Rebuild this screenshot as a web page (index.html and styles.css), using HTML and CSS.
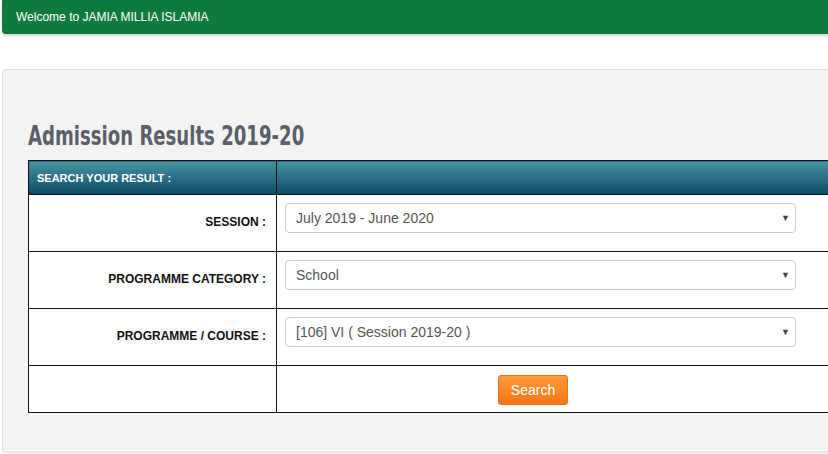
FILE: index.html
```html
<!DOCTYPE html>
<html lang="en">
<head>
    <meta charset="UTF-8">
    <title>Admission Results 2019-20</title>
    <link rel="stylesheet" href="styles.css">
</head>
<body>
    <div class="topbar">Welcome to JAMIA MILLIA ISLAMIA</div>
    <div class="panel">
        <h2><span>Admission Results 2019-20</span></h2>
        <table class="result">
            <tr class="head">
                <th>SEARCH YOUR RESULT :</th>
                <th></th>
            </tr>
            <tr>
                <td class="label">SESSION :</td>
                <td class="field">
                    <div class="select">July 2019 - June 2020<span class="arrow">&#9660;</span></div>
                </td>
            </tr>
            <tr>
                <td class="label">PROGRAMME CATEGORY :</td>
                <td class="field">
                    <div class="select">School<span class="arrow">&#9660;</span></div>
                </td>
            </tr>
            <tr>
                <td class="label">PROGRAMME / COURSE :</td>
                <td class="field">
                    <div class="select">[106] VI ( Session 2019-20 )<span class="arrow">&#9660;</span></div>
                </td>
            </tr>
            <tr class="last">
                <td></td>
                <td class="action"><button class="btn">Search</button></td>
            </tr>
        </table>
    </div>
</body>
</html>
```

FILE: styles.css
```css
html, body {
    overflow: hidden;
}
body {
    margin: 0;
    font-family: "Liberation Sans", Arial, sans-serif;
    background: #fff;
    width: 1100px;
}
.topbar {
    margin-left: 2px;
    height: 34px;
    line-height: 35px;
    padding-left: 14px;
    background: #0f7a3e;
    color: #fff;
    font-size: 12px;
    border-bottom-left-radius: 4px;
    box-shadow: 0 2px 3px rgba(0,0,0,0.18);
}
.panel {
    margin: 35px 0 0 2px;
    background: #f3f3f3;
    border: 1px solid #e2e2e2;
    border-radius: 4px;
    padding: 50px 0 39px 25px;
}
h2 {
    margin: 0 0 8px 0;
    font-family: "DejaVu Sans Condensed", sans-serif;
    font-weight: bold;
    font-size: 27px;
    line-height: 32px;
    color: #5b6068;
}
/* no narrow face installed, squeeze the condensed one */
h2 span {
    display: inline-block;
    transform: scaleX(0.745);
    transform-origin: left center;
}
.result {
    border-collapse: collapse;
    background: #fff;
    width: 1000px;
}
.result th, .result td {
    border: 1px solid #111;
    padding: 0;
}
.head th {
    height: 32px;
    background: linear-gradient(#4595a4, #0f4a66);
    color: #fff;
    font-size: 11px;
    text-align: left;
    padding-left: 8px;
    padding-top: 1px;
}
.head th:first-child {
    width: 239px;
}
.label {
    height: 54px;
    text-align: right;
    font-size: 12px;
    font-weight: bold;
    color: #111;
    padding-right: 10px !important;
    padding-bottom: 2px !important;
}
.field {
    padding: 8px 0 0 8px !important;
    vertical-align: top;
}
.select {
    width: 494px;
    height: 28px;
    line-height: 28px;
    border: 1px solid #ccc;
    border-radius: 4px;
    background: #fff;
    padding-left: 10px;
    padding-right: 5px;
    font-size: 14px;
    color: #555;
    display: flex;
    justify-content: space-between;
}
.arrow {
    font-size: 9px;
    color: #444;
}
.last td {
    height: 46px;
}
.action {
    padding-left: 221px !important;
}
.btn {
    width: 70px;
    height: 30px;
    border: 1px solid #e8731c;
    border-radius: 3px;
    background: linear-gradient(#ff9c3c, #f57414);
    color: #fff;
    font-family: "Liberation Sans", Arial, sans-serif;
    font-size: 14px;
    padding: 0;
    margin-top: 1px;
}
```
